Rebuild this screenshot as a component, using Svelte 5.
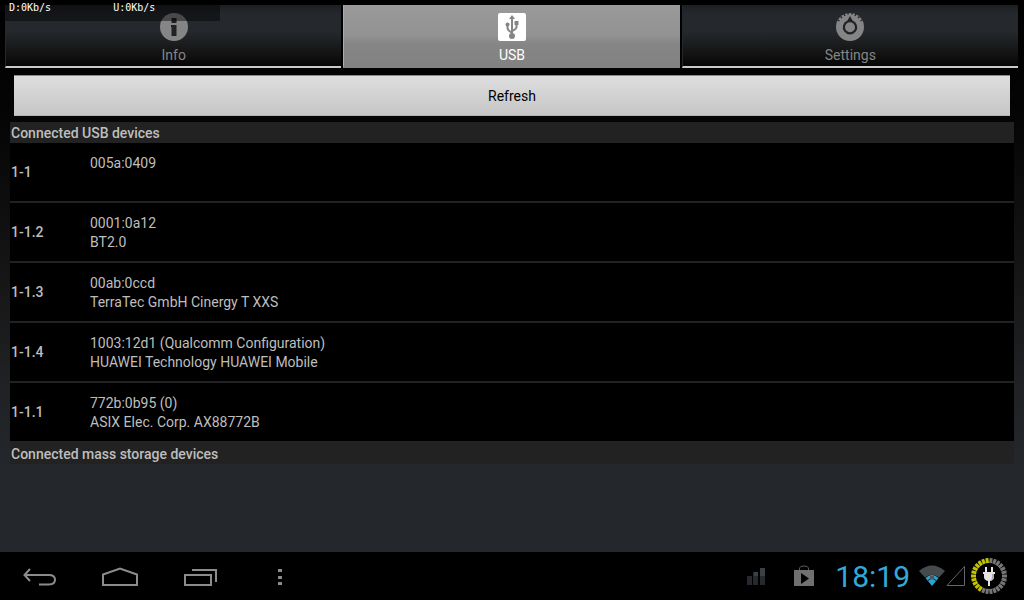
<script lang="ts">
interface Device {
    port: string;
    id: string;
    name: string;
}

const tabs = ['Info', 'USB', 'Settings'];
let activeTab = $state('USB');

const connected: Device[] = [
    { port: '1-1', id: '005a:0409', name: '' },
    { port: '1-1.2', id: '0001:0a12', name: 'BT2.0' },
    { port: '1-1.3', id: '00ab:0ccd', name: 'TerraTec GmbH Cinergy T XXS' },
    { port: '1-1.4', id: '1003:12d1 (Qualcomm Configuration)', name: 'HUAWEI Technology HUAWEI Mobile' },
    { port: '1-1.1', id: '772b:0b95 (0)', name: 'ASIX Elec. Corp. AX88772B' }
];
let devices = $state(connected);

function refresh() {
    devices = [...connected];
}

// Charge ring around the plug icon
const segments = 26;
const charged = 11;
const ring = Array.from({ length: segments }, (_, i) => ({
    angle: -(i + 0.5) * (360 / segments),
    on: i < charged
}));
</script>

<div class="screen">
    <div class="traffic">
        <span>D:0Kb/s</span>
        <span>U:0Kb/s</span>
    </div>

    <nav class="tabs">
        {#each tabs as tab}
            <button class="tab" class:active={tab === activeTab} onclick={() => (activeTab = tab)}>
                <svg width="28" height="28" viewBox="0 0 28 28" aria-hidden="true">
                    {#if tab === 'Info'}
                        <circle cx="14" cy="14" r="14" fill="#858585" />
                        <path d="M11.500 5h5v5h-5zM11 12h5.500v11H11.500V14H11z" fill="#202226" />
                    {:else if tab === 'USB'}
                        <rect width="28" height="28" rx="2" fill="#fff" />
                        <g fill="none" stroke="#858585" stroke-width="2">
                            <path d="M14 5v18" />
                            <path d="M9.500 12v3q0 2 4.500 5" />
                            <path d="M18.500 10v4q0 2-4.500 4" />
                        </g>
                        <g fill="#858585">
                            <path d="M14 2l3 4h-6z" />
                            <circle cx="9.500" cy="11.500" r="2" />
                            <path d="M16.500 8h4v4h-4z" />
                            <circle cx="14" cy="23" r="3" />
                        </g>
                    {:else}
                        <circle cx="14" cy="14" r="14" fill="#858585" />
                        <path d="M12 0v1.500M16 0v1.500M8 1l1 2M20 1l-1 2M4.500 3.500l1.500 1.500M23.500 3.500L22 5M2 7l1.500 1M26 7l-1.500 1" stroke="#24272b" stroke-width="1.500" />
                        <path d="M14 3l2.500 4.500a7.200 7.200 0 1 1-5 0z" fill="#202226" />
                        <circle cx="14" cy="14.300" r="5" fill="#858585" />
                    {/if}
                </svg>
                <span>{tab}</span>
            </button>
        {/each}
    </nav>

    <main>
        <button class="refresh" onclick={refresh}>Refresh</button>
        <section>
            <h2>Connected USB devices</h2>
            <ul>
                {#each devices as device}
                    <li>
                        <strong>{device.port}</strong>
                        <div class="info">
                            <p>{device.id}</p>
                            <p>{device.name}</p>
                        </div>
                    </li>
                {/each}
            </ul>
            <h2 class="storage">Connected mass storage devices</h2>
        </section>
    </main>

    <footer>
        <div class="keys">
            <button aria-label="Back">
                <svg width="36" height="24" viewBox="0 0 36 24">
                    <path d="M8 3L2.500 9 8 15M3 9h24q6 0 6 4.700t-6 4.700H17" />
                </svg>
            </button>
            <button aria-label="Home">
                <svg width="36" height="24" viewBox="0 0 36 24">
                    <path d="M1 19V8.500L18 2.500 35 8.500V19z" />
                </svg>
            </button>
            <button aria-label="Recent apps">
                <svg width="36" height="24" viewBox="0 0 36 24">
                    <path d="M3 9h26v10H3zM10 4h24v12" />
                </svg>
            </button>
            <button aria-label="Menu">
                <svg width="36" height="24" viewBox="0 0 36 24">
                    <path class="dots" d="M16 3h4v3h-4zM16 10h4v3h-4zM16 16h4v3h-4z" />
                </svg>
            </button>
        </div>

        <div class="status">
            <svg width="18" height="18" viewBox="0 0 18 18" aria-hidden="true">
                <path d="M0 9h5v9H0zM6 5h5v13H6zM13 1h5v17h-5z" fill="#25282c" />
                <path d="M7 5h4v4H7zM13 1h5v8h-5z" fill="#3c4043" />
            </svg>
            <svg class="store" width="22" height="22" viewBox="0 0 22 22" aria-hidden="true">
                <path d="M6.500 6V4q0-3 4.500-3t4.500 3v2" fill="none" stroke="#606060" />
                <path d="M1 5h20v16H1z" fill="#707070" />
                <path d="M8 8l8 5.500L8 19z" fill="#000" />
            </svg>
            <time>18:19</time>
            <svg class="wifi" width="26" height="22" viewBox="0 0 26 22" aria-hidden="true">
                <path d="M0 6Q13-5 26 6L20 12.500Q13 7 6 12.500z" fill="#454a4d" />
                <path d="M6.500 13Q13 7 19.500 13L13 21z" fill="#2ba4d4" />
                <path d="M8.500 16Q13 11 17.500 16" fill="none" stroke="#111" />
                <path d="M11 11h4v3h-4z" fill="#555" />
            </svg>
            <svg width="20" height="22" viewBox="0 0 20 22" aria-hidden="true">
                <path d="M18.500 1.500v19H1z" fill="none" stroke="#666" />
            </svg>
            <svg class="battery" width="38" height="38" viewBox="0 0 38 38" aria-hidden="true">
                {#each ring as segment}
                    <path d="M17.500 1h3v5h-3z" fill={segment.on ? '#c3c400' : '#777'} transform="rotate({segment.angle} 19 19)" />
                {/each}
                <path d="M15 10h2v5h4v-5h2v5h2v2h-1v3q0 3-4 4v5h-2v-5q-4-1-4-4v-3h-1v-2h2z" fill="#e4e4e4" />
                <path d="M22 17h2v3q0 3-4 4 2-1 2-4z" fill="#aaa" />
            </svg>
        </div>
    </footer>
</div>

<style>
    :global(body) {
        margin: 0;
        background: #000;
    }

    .screen {
        position: relative;
        min-height: 100vh;
        display: flex;
        flex-direction: column;
        background: linear-gradient(#000 0%, #050505 20%, #151515 45%, #202225 65%, #24282c 80%);
        color: #bebebe;
        font-family: Roboto, 'Liberation Sans', sans-serif;
        font-size: 14px;
        line-height: 19px;
    }

    button {
        border: none;
        padding: 0;
        font: inherit;
        cursor: pointer;
    }

    svg {
        display: block;
        flex: none;
    }

    /* Overlay drawn by the network monitor */
    .traffic {
        position: absolute;
        top: 0;
        left: 0;
        width: 220px;
        height: 21px;
        box-sizing: border-box;
        padding: 2px 9px;
        display: flex;
        gap: 62px;
        background: rgba(0, 0, 0, 0.45);
        color: #fff;
        font-family: 'DejaVu Sans Mono', monospace;
        font-size: 10px;
        line-height: 12px;
        pointer-events: none;
    }

    .tabs {
        display: flex;
        gap: 2px;
        padding: 5px 6px 0 5px;
    }

    .tab {
        flex: 1;
        display: flex;
        flex-direction: column;
        align-items: center;
        gap: 5px;
        height: 63px;
        box-sizing: border-box;
        padding-top: 8px;
        border-left: 1px solid #24272b;
        border-bottom: 2px solid #cacaca;
        background: linear-gradient(#1c1e22, #25292e 15%, #24272b 45%, #131313 80%, #060606);
        color: #858585;
    }

    .tab.active {
        border-left-color: #ababab;
        border-bottom-color: #828282;
        background: linear-gradient(#9a9a9a, #929292 50%, #858585 65%, #828282);
        color: #fff;
    }

    main {
        flex: 1;
        display: flex;
        flex-direction: column;
        padding: 7px 10px;
    }

    .refresh {
        height: 41px;
        margin: 0 4px 6px;
        padding-top: 2px;
        box-sizing: border-box;
        border-top: 1px solid #8a8a8a;
        border-bottom: 1px solid #b4b4b4;
        background: linear-gradient(#dedede, #c6c6c6);
        color: #000;
    }

    h2 {
        margin: 0;
        padding: 2px 1px 0;
        background: #222;
        font-size: 14px;
        font-weight: 500;
    }

    .storage {
        padding: 4px 1px 0;
    }

    ul {
        margin: 0;
        padding: 0;
        list-style: none;
        background: #000;
    }

    li {
        display: flex;
        align-items: center;
        height: 58px;
        padding-left: 1px;
    }

    li + li {
        border-top: 2px solid #222;
    }

    strong {
        width: 79px;
        font-weight: 500;
    }

    .info {
        padding-top: 2px;
    }

    .info p {
        margin: 0;
        min-height: 19px;
    }

    footer {
        display: flex;
        align-items: center;
        justify-content: space-between;
        height: 48px;
        padding: 0 16px 0 22px;
        background: #000;
    }

    .keys {
        display: flex;
        gap: 44px;
        padding-top: 4px;
    }

    .keys button {
        background: none;
    }

    .keys path {
        fill: none;
        stroke: #8c8c8c;
        stroke-width: 2;
    }

    .keys .dots {
        fill: #8c8c8c;
        stroke: none;
    }

    .status {
        display: flex;
        align-items: center;
    }

    .store {
        margin: 0 20px 0 28px;
    }

    time {
        padding-top: 2px;
        color: #33a9d8;
        font-size: 30px;
        line-height: 36px;
    }

    .wifi {
        margin: 0 1px 0 9px;
    }

    .battery {
        margin-left: 4px;
    }
</style>
